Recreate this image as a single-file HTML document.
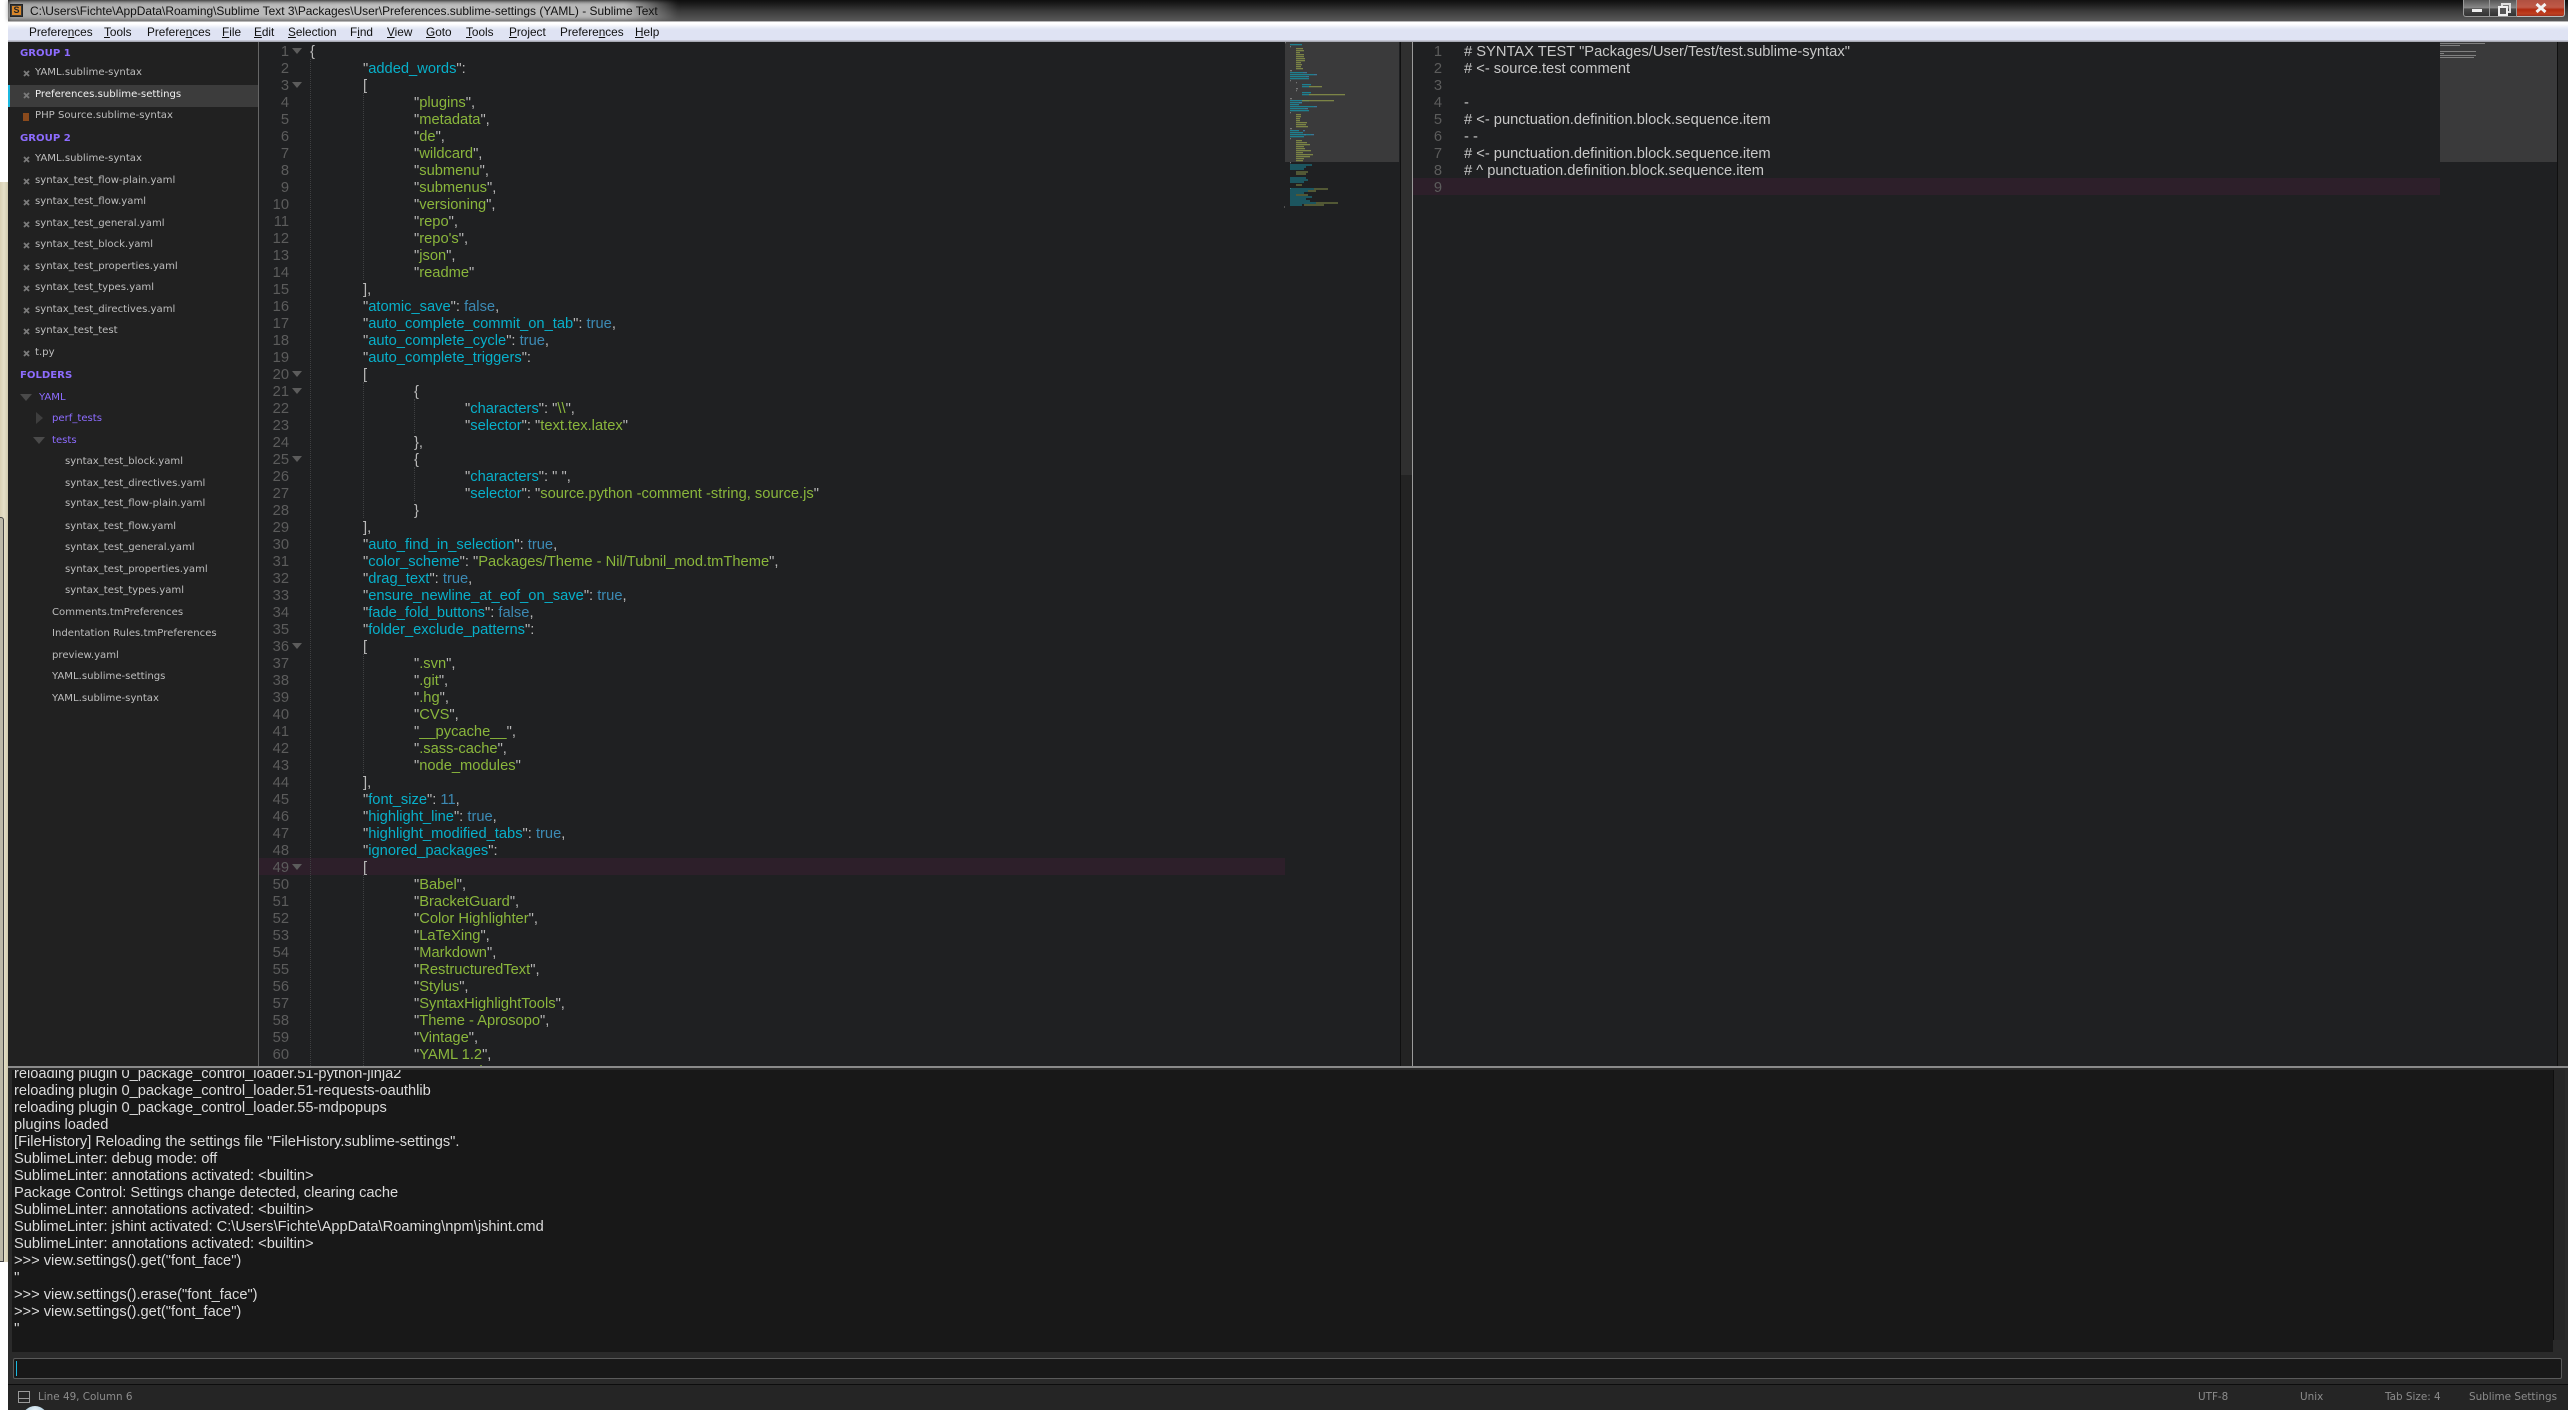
<!DOCTYPE html>
<html style="overflow:hidden;width:2568px;height:1410px"><head><meta charset="utf-8"><title>Preferences.sublime-settings - Sublime Text</title>
<style>
html,body{margin:0;padding:0;background:#fff}
body{position:relative;width:2568px;height:1410px;overflow:hidden;font-family:"Liberation Sans",sans-serif}
.a{position:absolute}
#strip{left:0;top:182px;width:8px;height:1080px;background:linear-gradient(90deg,#d8d0b4,#e6e0c8 50%,#cfc9ae)}
#win{left:0;top:517px;width:4px;height:745px;background:#bdb9a8;border-right:1px solid #444;border-top:1px solid #444;border-bottom:1px solid #444;box-sizing:border-box;border-top-right-radius:3px}
#title{left:8px;top:0;width:2560px;height:21px;background:linear-gradient(180deg,#0e0e0e 0,#1c1c1c 4px,#3e3e3e 12px,#565656 20px)}
#glow{left:8px;top:1px;width:670px;height:19px;background:linear-gradient(90deg,#a8a8a8 0,#c0c0c0 50%,#b8b8b8 92%,rgba(160,160,160,0) 100%);filter:blur(2px)}
#ttext{left:30px;top:3px;font-size:11.95px;line-height:16px;color:#111;white-space:pre}
#menu{left:8px;top:21px;width:2560px;height:21px;background:linear-gradient(180deg,#6e6e6e 0,#fff 1px,#fff 3px,#e6ebf6 7px,#dfe3f3 9px,#dfe3f3 19px,#a8aab4 20px,#a8aab4 21px)}
.m{position:absolute;top:24px;font-size:11.8px;line-height:16px;color:#111;white-space:pre}
#side{left:8px;top:42px;width:250px;height:1024px;background:#212121;border-right:1px solid #666;box-sizing:content-box}
.r{position:absolute;margin-top:1px;font-family:"DejaVu Sans",sans-serif;font-size:10.1px;line-height:20px;color:#bdbdbd;white-space:pre}
.g{color:#8d6cff;font-weight:bold;font-family:"DejaVu Sans",sans-serif;font-size:10.1px}
.p{color:#8d6cff}
.x{position:absolute;left:23px;width:7px;height:7px}
#ed1{left:259px;top:42px;width:1153px;height:1024px;background:#1f2022;overflow:hidden}
#ed2{left:1412px;top:42px;width:1156px;height:1024px;background:#1f2022;overflow:hidden;border-left:1px solid #9a9a9a;box-sizing:border-box}
.code{position:absolute;top:1.5px;font-size:14.7px;line-height:17px;color:#b9b9b9}
.code div{height:17px;white-space:pre}
.n{position:absolute;top:1.5px;text-align:right;font-size:14.7px;line-height:17px;color:#5c5c5c;white-space:pre}
.t1{padding-left:53px}.t2{padding-left:104px}.t3{padding-left:155px}
b{font-weight:normal;color:#08b0ca}
i{font-style:normal;color:#8ab63c}
s{text-decoration:none;color:#3c8ab4}
.fold{position:absolute;left:33px;width:0;height:0;border-left:5px solid transparent;border-right:5px solid transparent;border-top:6px solid #5c5c5c}
.ig{position:absolute;width:0;border-left:1px dotted #3f4042}
#con{left:8px;top:1066px;width:2560px;height:318px;background:#2a2a2a}
#csep{left:8px;top:1066px;width:2560px;height:2px;background:#8a8a8a}
#cbody{left:12px;top:1070px;width:2541px;height:282px;background:#181818;overflow:hidden}
#ctext{position:absolute;left:2px;top:-4px;font-size:14.65px;line-height:17px;color:#dcdcdc;white-space:pre}
#input{left:13px;top:1358px;width:2549px;height:21px;background:#181818;border:1px solid #5a5a5a;box-sizing:border-box;border-radius:2px}
#status{left:8px;top:1384px;width:2560px;height:26px;background:#252525;border-top:1px solid #0d0d0d;box-sizing:border-box}
.st{position:absolute;top:1387px;font-family:"DejaVu Sans",sans-serif;font-size:10.4px;line-height:20px;color:#8c8c8c;white-space:pre}
</style></head><body>
<div class="a" id="strip"></div><div class="a" id="win"></div>

<div class="a" id="title"></div><div class="a" id="glow"></div>
<div class="a" style="left:10px;top:4px;width:13px;height:13px;background:#3a3a3a;border:1px solid #222;box-sizing:border-box"></div>
<div class="a" style="left:12px;top:6px;width:9px;height:9px;background:#d8862a;color:#222;font-size:9px;line-height:9px;text-align:center;font-weight:bold">S</div>
<div class="a" id="ttext">C:\Users\Fichte\AppData\Roaming\Sublime Text 3\Packages\User\Preferences.sublime-settings (YAML) - Sublime Text</div>
<div class="a" style="left:2463px;top:0;width:27px;height:17px;box-sizing:border-box;border:1px solid #999;border-top:0;border-radius:0 0 0 3px;background:linear-gradient(180deg,#555,#8a8a8a 50%,#4a4a4a 55%,#333)"></div>
<div class="a" style="left:2472px;top:9px;width:10px;height:3px;background:#eee"></div>
<div class="a" style="left:2490px;top:0;width:27px;height:17px;box-sizing:border-box;border:1px solid #999;border-top:0;border-left:0;background:linear-gradient(180deg,#555,#8a8a8a 50%,#4a4a4a 55%,#333)"></div>
<div class="a" style="left:2501px;top:3px;border:2px solid #ddd;width:6px;height:6px"></div>
<div class="a" style="left:2498px;top:6px;width:6px;height:6px;border:2px solid #eee;background:#555"></div>
<div class="a" style="left:2517px;top:0;width:48px;height:17px;box-sizing:border-box;border:1px solid #bbb;border-top:0;border-left:0;border-radius:0 0 3px 0;background:linear-gradient(180deg,#b05040,#c05a48 45%,#b02a10 60%,#c04020 85%,#a03020)"></div>
<svg class="a" style="left:2535px;top:3px" width="12" height="10"><path d="M1.5 1 10.5 9M10.5 1 1.5 9" stroke="#f2f2f2" stroke-width="3"/></svg>

<div class="a" id="menu"></div>
<span class="m" style="left:29px">Prefere<u>n</u>ces</span>
<span class="m" style="left:104px"><u>T</u>ools</span>
<span class="m" style="left:147px">Prefere<u>n</u>ces</span>
<span class="m" style="left:222px"><u>F</u>ile</span>
<span class="m" style="left:254px"><u>E</u>dit</span>
<span class="m" style="left:288px"><u>S</u>election</span>
<span class="m" style="left:350px">F<u>i</u>nd</span>
<span class="m" style="left:387px"><u>V</u>iew</span>
<span class="m" style="left:426px"><u>G</u>oto</span>
<span class="m" style="left:466px"><u>T</u>ools</span>
<span class="m" style="left:509px"><u>P</u>roject</span>
<span class="m" style="left:560px">Prefere<u>n</u>ces</span>
<span class="m" style="left:635px"><u>H</u>elp</span>

<svg width="0" height="0" style="position:absolute"><defs><symbol id="xi" viewBox="0 0 7 7"><path d="M1 1 6 6M6 1 1 6" stroke="#7a7a7a" stroke-width="1.8" fill="none"/></symbol></defs></svg>

<div class="a" id="side"></div>
<div class="a" style="left:8px;top:85px;width:250px;height:22px;background:#3c3c3c"></div>
<div class="a" style="left:8px;top:85px;width:2px;height:22px;background:#1bb8e0"></div>

<span class="r g" style="left:20px;top:43px">GROUP 1</span>
<svg class="x" style="top:70px"><use href="#xi"/></svg><span class="r" style="left:35px;top:62px">YAML.sublime-syntax</span>
<svg class="x" style="top:92px"><use href="#xi"/></svg><span class="r" style="left:35px;top:84px;color:#f0f0f0">Preferences.sublime-settings</span>
<div class="a" style="left:23px;top:113px;width:6px;height:8px;background:#8a4a1c"></div><span class="r" style="left:35px;top:105px">PHP Source.sublime-syntax</span>
<span class="r g" style="left:20px;top:128px">GROUP 2</span>
<svg class="x" style="top:156px"><use href="#xi"/></svg><span class="r" style="left:35px;top:148px">YAML.sublime-syntax</span>
<svg class="x" style="top:178px"><use href="#xi"/></svg><span class="r" style="left:35px;top:170px">syntax_test_flow-plain.yaml</span>
<svg class="x" style="top:199px"><use href="#xi"/></svg><span class="r" style="left:35px;top:191px">syntax_test_flow.yaml</span>
<svg class="x" style="top:221px"><use href="#xi"/></svg><span class="r" style="left:35px;top:213px">syntax_test_general.yaml</span>
<svg class="x" style="top:242px"><use href="#xi"/></svg><span class="r" style="left:35px;top:234px">syntax_test_block.yaml</span>
<svg class="x" style="top:264px"><use href="#xi"/></svg><span class="r" style="left:35px;top:256px">syntax_test_properties.yaml</span>
<svg class="x" style="top:285px"><use href="#xi"/></svg><span class="r" style="left:35px;top:277px">syntax_test_types.yaml</span>
<svg class="x" style="top:307px"><use href="#xi"/></svg><span class="r" style="left:35px;top:299px">syntax_test_directives.yaml</span>
<svg class="x" style="top:328px"><use href="#xi"/></svg><span class="r" style="left:35px;top:320px">syntax_test_test</span>
<svg class="x" style="top:350px"><use href="#xi"/></svg><span class="r" style="left:35px;top:342px">t.py</span>
<span class="r g" style="left:20px;top:365px">FOLDERS</span>
<div class="a" style="left:20px;top:394px;border-left:6px solid transparent;border-right:6px solid transparent;border-top:7px solid #4a4a4a"></div>
<span class="r p" style="left:39px;top:387px">YAML</span>
<div class="a" style="left:36px;top:412px;border-top:6px solid transparent;border-bottom:6px solid transparent;border-left:7px solid #3e3e3e"></div>
<span class="r p" style="left:52px;top:408px">perf_tests</span>
<div class="a" style="left:33px;top:437px;border-left:6px solid transparent;border-right:6px solid transparent;border-top:7px solid #4a4a4a"></div>
<span class="r p" style="left:52px;top:430px">tests</span>
<span class="r" style="left:65px;top:451px">syntax_test_block.yaml</span>
<span class="r" style="left:65px;top:473px">syntax_test_directives.yaml</span>
<span class="r" style="left:65px;top:493px">syntax_test_flow-plain.yaml</span>
<span class="r" style="left:65px;top:516px">syntax_test_flow.yaml</span>
<span class="r" style="left:65px;top:537px">syntax_test_general.yaml</span>
<span class="r" style="left:65px;top:559px">syntax_test_properties.yaml</span>
<span class="r" style="left:65px;top:580px">syntax_test_types.yaml</span>
<span class="r" style="left:52px;top:602px">Comments.tmPreferences</span>
<span class="r" style="left:52px;top:623px">Indentation Rules.tmPreferences</span>
<span class="r" style="left:52px;top:645px">preview.yaml</span>
<span class="r" style="left:52px;top:666px">YAML.sublime-settings</span>
<span class="r" style="left:52px;top:688px">YAML.sublime-syntax</span>

<div class="a" id="ed1">
<div class="a" style="left:0;top:816px;width:1026px;height:17px;background:#2d1f2a"></div>
<div class="a" style="left:1026px;top:0;width:114px;height:120px;background:#3a3a3b"></div>
<div class="a" style="left:1141px;top:0;width:12px;height:1024px;background:#232323"></div>
<div class="a" style="left:1141px;top:0;width:12px;height:433px;background:#2f2f2f"></div>
<div class="a" style="left:1141px;top:0;width:1px;height:1024px;background:#101010"></div>
<div class="n" style="left:0;width:30px">1
2
3
4
5
6
7
8
9
10
11
12
13
14
15
16
17
18
19
20
21
22
23
24
25
26
27
28
29
30
31
32
33
34
35
36
37
38
39
40
41
42
43
44
45
46
47
48
49
50
51
52
53
54
55
56
57
58
59
60
61</div>
<div class="fold" style="top:6px"></div><div class="fold" style="top:40px"></div><div class="fold" style="top:329px"></div><div class="fold" style="top:346px"></div><div class="fold" style="top:414px"></div><div class="fold" style="top:601px"></div><div class="fold" style="top:822px"></div>
<div class="ig" style="left:51px;top:17px;height:1007px"></div>
<div class="ig" style="left:104px;top:51px;height:187px"></div>
<div class="ig" style="left:104px;top:340px;height:136px"></div>
<div class="ig" style="left:155px;top:357px;height:34px"></div>
<div class="ig" style="left:155px;top:425px;height:34px"></div>
<div class="ig" style="left:104px;top:612px;height:119px"></div>
<div class="ig" style="left:104px;top:833px;height:191px"></div>
<div class="code" style="left:51px">
<div>{</div>
<div class="t1">"<b>added_words</b>":</div>
<div class="t1">[</div>
<div class="t2">"<i>plugins</i>",</div>
<div class="t2">"<i>metadata</i>",</div>
<div class="t2">"<i>de</i>",</div>
<div class="t2">"<i>wildcard</i>",</div>
<div class="t2">"<i>submenu</i>",</div>
<div class="t2">"<i>submenus</i>",</div>
<div class="t2">"<i>versioning</i>",</div>
<div class="t2">"<i>repo</i>",</div>
<div class="t2">"<i>repo's</i>",</div>
<div class="t2">"<i>json</i>",</div>
<div class="t2">"<i>readme</i>"</div>
<div class="t1">],</div>
<div class="t1">"<b>atomic_save</b>": <s>false</s>,</div>
<div class="t1">"<b>auto_complete_commit_on_tab</b>": <s>true</s>,</div>
<div class="t1">"<b>auto_complete_cycle</b>": <s>true</s>,</div>
<div class="t1">"<b>auto_complete_triggers</b>":</div>
<div class="t1">[</div>
<div class="t2">{</div>
<div class="t3">"<b>characters</b>": "<i>\\</i>",</div>
<div class="t3">"<b>selector</b>": "<i>text.tex.latex</i>"</div>
<div class="t2">},</div>
<div class="t2">{</div>
<div class="t3">"<b>characters</b>": "<i> </i>",</div>
<div class="t3">"<b>selector</b>": "<i>source.python -comment -string, source.js</i>"</div>
<div class="t2">}</div>
<div class="t1">],</div>
<div class="t1">"<b>auto_find_in_selection</b>": <s>true</s>,</div>
<div class="t1">"<b>color_scheme</b>": "<i>Packages/Theme - Nil/Tubnil_mod.tmTheme</i>",</div>
<div class="t1">"<b>drag_text</b>": <s>true</s>,</div>
<div class="t1">"<b>ensure_newline_at_eof_on_save</b>": <s>true</s>,</div>
<div class="t1">"<b>fade_fold_buttons</b>": <s>false</s>,</div>
<div class="t1">"<b>folder_exclude_patterns</b>":</div>
<div class="t1">[</div>
<div class="t2">"<i>.svn</i>",</div>
<div class="t2">"<i>.git</i>",</div>
<div class="t2">"<i>.hg</i>",</div>
<div class="t2">"<i>CVS</i>",</div>
<div class="t2">"<i>__pycache__</i>",</div>
<div class="t2">"<i>.sass-cache</i>",</div>
<div class="t2">"<i>node_modules</i>"</div>
<div class="t1">],</div>
<div class="t1">"<b>font_size</b>": <s>11</s>,</div>
<div class="t1">"<b>highlight_line</b>": <s>true</s>,</div>
<div class="t1">"<b>highlight_modified_tabs</b>": <s>true</s>,</div>
<div class="t1">"<b>ignored_packages</b>":</div>
<div class="t1">[</div>
<div class="t2">"<i>Babel</i>",</div>
<div class="t2">"<i>BracketGuard</i>",</div>
<div class="t2">"<i>Color Highlighter</i>",</div>
<div class="t2">"<i>LaTeXing</i>",</div>
<div class="t2">"<i>Markdown</i>",</div>
<div class="t2">"<i>RestructuredText</i>",</div>
<div class="t2">"<i>Stylus</i>",</div>
<div class="t2">"<i>SyntaxHighlightTools</i>",</div>
<div class="t2">"<i>Theme - Aprosopo</i>",</div>
<div class="t2">"<i>Vintage</i>",</div>
<div class="t2">"<i>YAML 1.2</i>",</div>
<div class="t2">"<i>YAML.md</i>",</div>
</div>
</div>

<svg class="a" style="left:1280px;top:42px" width="122" height="170" fill="none" stroke-width="1.1"><g transform="translate(-1280 -42)">
<path stroke="#808080" d="M1285 42.7h1M1290 46.7h1M1290 70.7h2M1290 80.7h1M1296 82.7h1M1296 88.7h2M1296 90.7h1M1290 98.7h2M1290 112.7h1M1290 128.7h2M1290 138.7h1M1290 162.7h1M1290 188.7h1M1284 207h1"/>
<path stroke="#1a8a9c" d="M1290 44.7h12M1290 72.7h13M1290 74.7h24M1290 76.7h16M1290 78.7h19M1302 84.7h9M1302 86.7h7M1302 92.7h9M1302 94.7h7M1290 100.7h19M1290 102.7h12M1290 104.7h9M1290 106.7h24M1290 108.7h15M1290 110.7h19M1290 130.7h9M1290 132.7h13M1290 134.7h21M1290 136.7h14M1290 165h22M1290 167h16M1290 169h14M1290 178h16M1290 180h18M1290 182h14M1290 189h24M1290 191h18M1290 193h14M1290 195h10M1290 197h22M1290 199h16M1290 201h20M1290 203h26M1290 205h12"/>
<path stroke="#3c7fa4" d="M1303 72.7h4M1314 74.7h3M1306 76.7h3M1303 130.7h2M1304 134.7h2M1311 134.7h3M1299 102.7h3M1305 108.7h3M1314 106.7h3"/>
<path stroke="#858f48" d="M1296 48.7h7M1296 50.7h8M1296 52.7h4M1296 54.7h8M1296 56.7h8M1296 58.7h9M1296 60.7h9M1296 62.7h5M1296 64.7h6M1296 66.7h5M1296 68.7h7M1309 86.7h13M1309 94.7h36M1302 100.7h32M1296 114.7h5M1296 116.7h5M1296 118.7h4M1296 120.7h4M1296 122.7h11M1296 124.7h10M1296 126.7h12M1296 140.7h6M1296 142.7h11M1296 144.7h14M1296 146.7h8M1296 148.7h9M1296 150.7h15M1296 152.7h7M1296 154.7h17M1296 156.7h14M1296 158.7h8M1296 160.7h7M1296 172h12M1296 174h10M1296 185h6M1296 195h12M1314 189h14M1308 191h8M1316 203h22M1304 205h20"/>
</g></svg>

<div class="a" id="ed2">
<div class="a" style="left:0;top:136px;width:1027px;height:17px;background:#2d1f2a"></div>
<div class="a" style="left:1027px;top:0;width:117px;height:120px;background:#3a3a3b"></div>
<div class="a" style="left:1144px;top:0;width:1px;height:1024px;background:#101010"></div>
<div class="a" style="left:1145px;top:0;width:11px;height:1024px;background:#272727"></div>
<div class="n" style="left:0;width:29px">1
2
3
4
5
6
7
8
9</div>
<div class="code" style="left:51px;color:#c8c8c8">
<div># SYNTAX TEST "Packages/User/Test/test.sublime-syntax"</div>
<div># &lt;- source.test comment</div>
<div>&nbsp;</div>
<div>-</div>
<div># &lt;- punctuation.definition.block.sequence.item</div>
<div>- -</div>
<div># &lt;- punctuation.definition.block.sequence.item</div>
<div># ^ punctuation.definition.block.sequence.item</div>
</div>
</div>
<svg class="a" style="left:2440px;top:42px" width="50" height="20" fill="none" stroke="#808080" stroke-width="1.1"><path d="M0 1.5h45M0 3.5h20M0 9.5h36M0 11.5h4M0 13.5h36M0 15.5h34"/></svg>

<div class="a" id="con"></div><div class="a" id="csep"></div>
<div class="a" id="cbody"><div id="ctext">reloading plugin 0_package_control_loader.51-python-jinja2
reloading plugin 0_package_control_loader.51-requests-oauthlib
reloading plugin 0_package_control_loader.55-mdpopups
plugins loaded
[FileHistory] Reloading the settings file "FileHistory.sublime-settings".
SublimeLinter: debug mode: off
SublimeLinter: annotations activated: &lt;builtin&gt;
Package Control: Settings change detected, clearing cache
SublimeLinter: annotations activated: &lt;builtin&gt;
SublimeLinter: jshint activated: C:\Users\Fichte\AppData\Roaming\npm\jshint.cmd
SublimeLinter: annotations activated: &lt;builtin&gt;
&gt;&gt;&gt; view.settings().get("font_face")
''
&gt;&gt;&gt; view.settings().erase("font_face")
&gt;&gt;&gt; view.settings().get("font_face")
''</div></div>
<div class="a" style="left:2553px;top:1070px;width:11px;height:270px;background:#262626;border-left:1px solid #0f0f0f"></div>
<div class="a" id="input"></div>
<div class="a" style="left:16px;top:1361px;width:1px;height:15px;background:#1bb8e0"></div>

<div class="a" id="status"></div>
<div class="a" style="left:18px;top:1391px;width:12px;height:12px;border:1px solid #999;box-sizing:border-box"></div>
<div class="a" style="left:18px;top:1398px;width:12px;height:1px;background:#999"></div>
<span class="st" style="left:38px">Line 49, Column 6</span>
<span class="st" style="left:2198px">UTF-8</span>
<span class="st" style="left:2300px">Unix</span>
<span class="st" style="left:2385px">Tab Size: 4</span>
<span class="st" style="left:2469px">Sublime Settings</span>
<div class="a" style="left:22px;top:1406px;width:26px;height:4px;overflow:hidden"><div style="width:26px;height:26px;border-radius:50%;background:radial-gradient(circle at 50% 20%,#eef6fb,#8fb8d0 60%,#4a7fa5)"></div></div>
</body></html>
